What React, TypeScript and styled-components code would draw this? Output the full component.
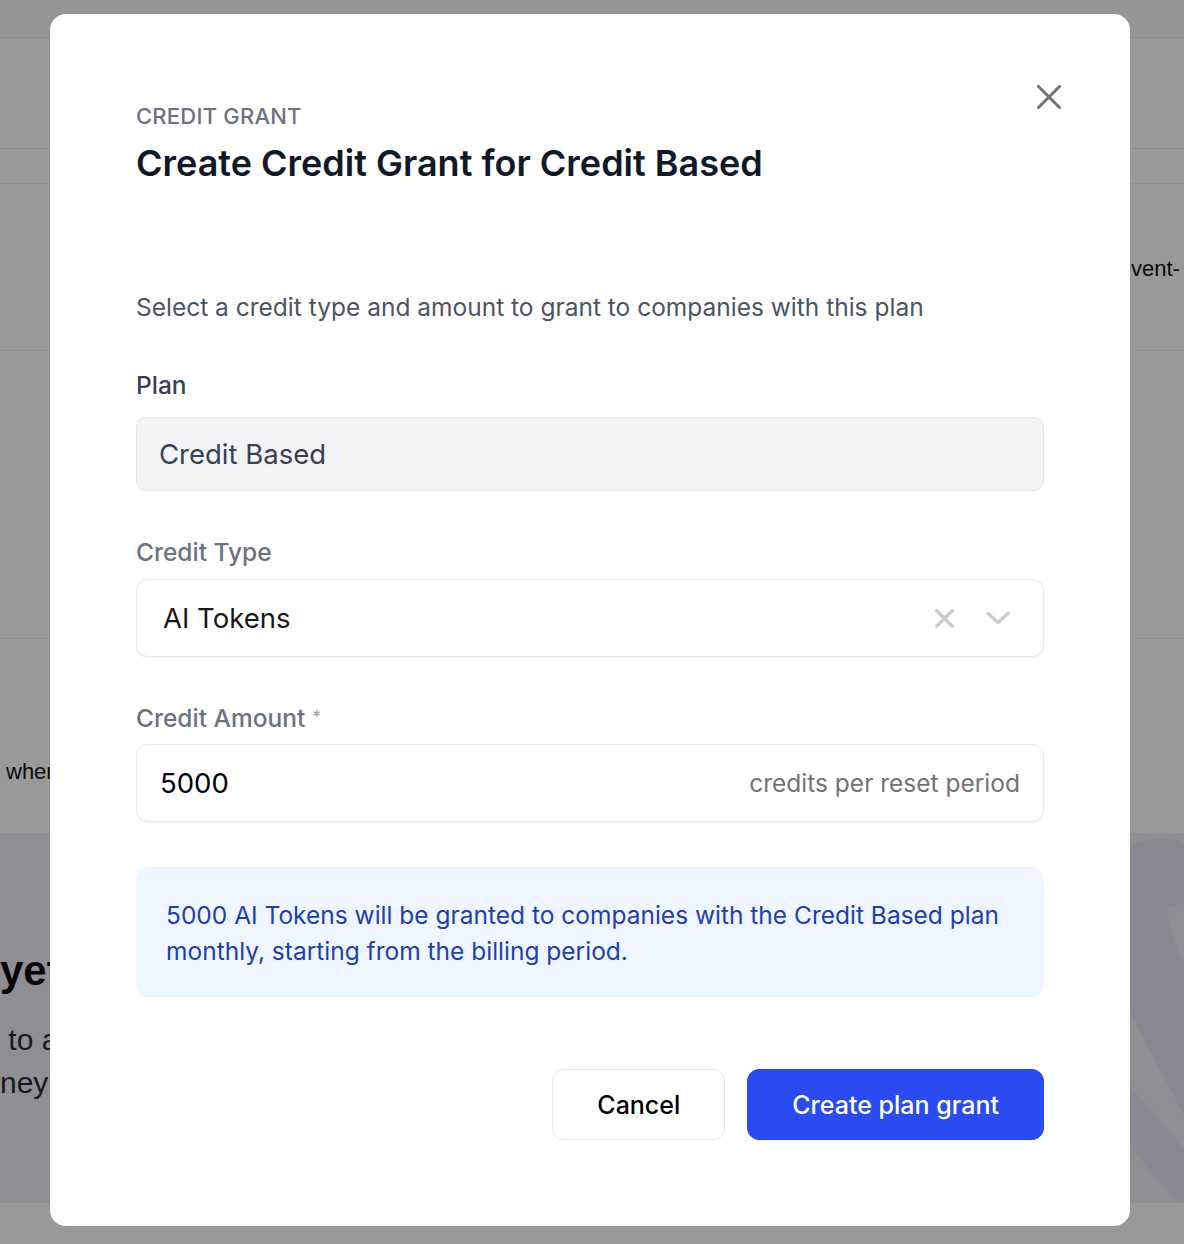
import styled, { createGlobalStyle } from "styled-components";

const GlobalStyle = createGlobalStyle`
  html, body {
    margin: 0;
    padding: 0;
  }
  body {
    font-family: "Liberation Sans", Arial, sans-serif;
    background: #ffffff;
  }
  * {
    box-sizing: border-box;
  }
`;

/* ---------- page behind the dialog ---------- */

const Page = styled.div`
  height: 1244px;
  overflow: hidden;
  display: flex;
  flex-direction: column;
  background: #ffffff;
`;

const PageRow = styled.div<{ h: number; line?: string; align?: string; pad?: string }>`
  height: ${(p) => p.h}px;
  flex-shrink: 0;
  display: flex;
  align-items: ${(p) => p.align || "center"};
  padding: ${(p) => p.pad || "0"};
  border-bottom: ${(p) => (p.line ? `1px solid ${p.line}` : "none")};
  overflow: hidden;
  white-space: nowrap;
  font-size: 22px;
  color: #111;
`;

const TopBar = styled(PageRow)`
  background: #fbfbfb;
`;

const Hero = styled.div`
  height: 370px;
  flex-shrink: 0;
  display: flex;
  justify-content: space-between;
  background: #eceef6;
  overflow: hidden;
`;

const HeroText = styled.div`
  display: flex;
  flex-direction: column;
  padding-top: 113px;
  color: #2b2b33;
  font-size: 30px;
  line-height: 43px;
  white-space: nowrap;
`;

const HeroTitle = styled.div`
  font-size: 42px;
  font-weight: 700;
  color: #0b0b0f;
  line-height: 50px;
  margin-bottom: 22px;
`;

/* ---------- dialog ---------- */

const Overlay = styled.div`
  position: fixed;
  inset: 0;
  background: rgba(0, 0, 0, 0.4);
  display: flex;
  justify-content: center;
  align-items: flex-start;
  padding: 14px 4px 0 0;
`;

const Modal = styled.div`
  position: relative;
  width: 1080px;
  background: #ffffff;
  border-radius: 16px;
  padding: 88px 86px 86px;
  font-family: Inter, "Noto Sans", sans-serif;
`;

const CloseButton = styled.button`
  position: absolute;
  top: 71px;
  right: 69px;
  width: 24px;
  height: 24px;
  padding: 0;
  border: none;
  background: none;
  display: flex;
  cursor: pointer;
`;

const Eyebrow = styled.div`
  font-size: 22px;
  line-height: 28px;
  font-weight: 500;
  color: #6b7280;
  letter-spacing: 0.01em;
`;

const Title = styled.h2`
  margin: 11px 0 0;
  font-size: 36px;
  line-height: 44px;
  font-weight: 600;
  color: #111827;
`;

const Subtitle = styled.p`
  margin: 106px 0 0;
  font-size: 24.5px;
  line-height: 32px;
  color: #4b5563;
`;

const Field = styled.div<{ top: number }>`
  display: flex;
  flex-direction: column;
  margin-top: ${(p) => p.top}px;
`;

const Label = styled.label<{ gap: number; strong?: boolean }>`
  font-size: 24.5px;
  line-height: 28px;
  font-weight: 500;
  color: ${(p) => (p.strong ? "#374151" : "#6b7280")};
  margin-bottom: ${(p) => p.gap}px;
`;

const Required = styled.span`
  color: #9ca3af;
  font-size: 17px;
  margin-left: 7px;
  vertical-align: 4px;
`;

const ReadOnlyInput = styled.div`
  height: 74px;
  display: flex;
  align-items: center;
  padding: 0 22px;
  background: #f3f4f6;
  border: 1px solid #e5e7eb;
  border-radius: 10px;
  font-size: 27.5px;
  color: #374151;
`;

const SelectBox = styled.div`
  height: 78px;
  display: flex;
  align-items: center;
  justify-content: space-between;
  padding: 0 32px 0 26px;
  background: #ffffff;
  border: 1px solid #e5e7eb;
  border-radius: 12px;
  box-shadow: 0 1px 2px rgba(0, 0, 0, 0.05);
  font-size: 27.5px;
  color: #18181b;
`;

const Indicators = styled.div`
  display: flex;
  align-items: center;
  gap: 31px;
`;

const InputBox = styled(SelectBox)`
  padding: 0 23px;
`;

const Value = styled.span`
  font-size: 27.5px;
  color: #000000;
`;

const Suffix = styled.span`
  font-size: 24.5px;
  color: #737373;
`;

const InfoBox = styled.div`
  margin-top: 45px;
  padding: 30px 30px 28px;
  background: #eff6ff;
  border-radius: 12px;
  font-size: 24.5px;
  line-height: 36px;
  color: #1e40af;
`;

const Actions = styled.div`
  margin-top: 72px;
  display: flex;
  justify-content: flex-end;
  gap: 22px;
`;

const Button = styled.button<{ primary?: boolean }>`
  height: 71px;
  padding: 0 44px;
  border-radius: 12px;
  font-family: Inter, "Noto Sans", sans-serif;
  font-size: 25px;
  font-weight: 500;
  cursor: pointer;
  border: 1px solid ${(p) => (p.primary ? "#2a4bf2" : "#e5e7eb")};
  background: ${(p) => (p.primary ? "#2a4bf2" : "#ffffff")};
  color: ${(p) => (p.primary ? "#ffffff" : "#000000")};
`;

const CrossIcon = ({ size, color, stroke }: { size: number; color: string; stroke: number }) => {
  const a = stroke / 2;
  const b = size - stroke / 2;
  return (
    <svg width={size} height={size} viewBox={`0 0 ${size} ${size}`} fill="none">
      <path d={`M${a} ${a} L${b} ${b} M${b} ${a} L${a} ${b}`} stroke={color} strokeWidth={stroke} strokeLinecap="round" />
    </svg>
  );
};

const ChevronIcon = () => (
  <svg width="26" height="16" viewBox="0 0 26 16" fill="none">
    <path d="M3 3.5 L13 12.5 L23 3.5" stroke="#cccccc" strokeWidth="3.5" strokeLinecap="round" strokeLinejoin="round" />
  </svg>
);

const App = () => {
  return (
    <>
      <GlobalStyle />
      <Page>
        <TopBar h={38} line="#e2e2e2" />
        <PageRow h={111} line="#e4e4e4" />
        <PageRow h={35} line="#f0f0f0" />
        <PageRow h={167} line="#f0f0f0" pad="4px 0 0 1131px">
          vent-
        </PageRow>
        <PageRow h={288} line="#f0f0f0" />
        <PageRow h={194} align="flex-end" pad="0 0 48px 6px">
          when
        </PageRow>
        <Hero>
          <HeroText>
            <HeroTitle>yet</HeroTitle>
            <span>&nbsp;to a</span>
            <span>ney</span>
          </HeroText>
          <svg width="120" height="370" viewBox="0 0 120 370" fill="none">
            <path d="M100 40 C 60 40, 60 90, 90 150 L 200 360" stroke="#e2e5f1" strokeWidth="70" strokeLinecap="round" />
            <path d="M20 230 L 140 370" stroke="#e4e7f2" strokeWidth="40" />
          </svg>
        </Hero>
      </Page>

      <Overlay>
        <Modal>
          <CloseButton aria-label="Close">
            <CrossIcon size={24} color="#737373" stroke={3} />
          </CloseButton>

          <Eyebrow>CREDIT GRANT</Eyebrow>
          <Title>Create Credit Grant for Credit Based</Title>

          <Subtitle>Select a credit type and amount to grant to companies with this plan</Subtitle>

          <Field top={48}>
            <Label gap={18} strong>
              Plan
            </Label>
            <ReadOnlyInput>Credit Based</ReadOnlyInput>
          </Field>

          <Field top={47}>
            <Label gap={13}>Credit Type</Label>
            <SelectBox>
              <span>AI Tokens</span>
              <Indicators>
                <CrossIcon size={19} color="#cccccc" stroke={3.5} />
                <ChevronIcon />
              </Indicators>
            </SelectBox>
          </Field>

          <Field top={46}>
            <Label gap={12}>
              Credit Amount<Required>*</Required>
            </Label>
            <InputBox>
              <Value>5000</Value>
              <Suffix>credits per reset period</Suffix>
            </InputBox>
          </Field>

          <InfoBox>
            5000 AI Tokens will be granted to companies with the Credit Based plan monthly, starting from the billing
            period.
          </InfoBox>

          <Actions>
            <Button>Cancel</Button>
            <Button primary>Create plan grant</Button>
          </Actions>
        </Modal>
      </Overlay>
    </>
  );
};

export default App;
